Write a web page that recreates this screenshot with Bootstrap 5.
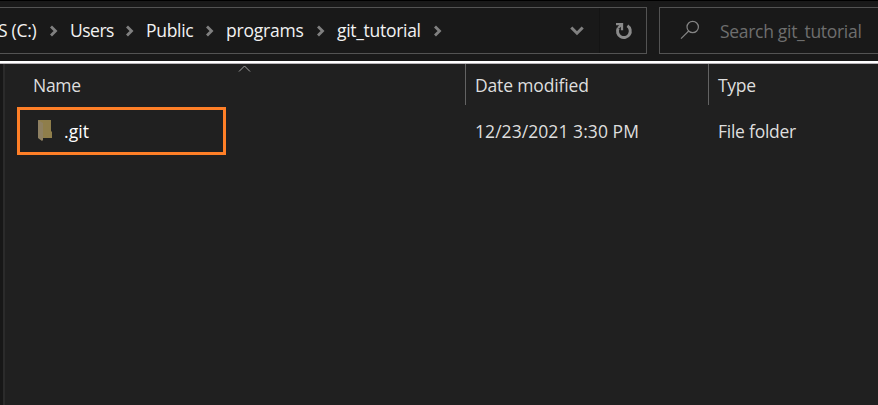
<!DOCTYPE html>
<html lang="en">
<head>
<meta charset="utf-8">
<meta name="viewport" content="width=device-width, initial-scale=1">
<title>git_tutorial</title>
<link href="https://cdn.jsdelivr.net/npm/bootstrap@5.3.0/dist/css/bootstrap.min.css" rel="stylesheet">
<style>
body{background:#202020;color:#dedede;font:17.5px/24px "Open Sans","Noto Sans",sans-serif;letter-spacing:-.3px;height:405px}
svg{display:block;flex:none}
.topbar{height:61px;background:#191919;border-top:1px solid #000;padding-top:6px}
.address{width:647px;height:47px;border:1px solid #535353;border-left:0;color:#f2f2f2}
.crumb{white-space:nowrap;flex:none;padding-bottom:1px}
.crumb-drive{width:50px;margin-left:-2px}
.crumb-users{width:54px;letter-spacing:-.5px}
.crumb-public{width:58px}
.crumb-programs{width:89px;letter-spacing:-.2px}
.crumb-current{width:95px}
.sep{width:22px;flex:none;padding-left:1px}
.chevron-down{margin-right:15px}
.reload{width:47px;border-left:1px solid #141414;padding-left:2px}
.search{width:219px;height:47px;border:1px solid #535353;border-right:0;margin-left:12px;color:#6e6e6e}
.search-icon{margin:-2px 20px 0 20px}
.divider{height:3px;background:#fff;border-bottom:1px solid #b8b4b8}
.pane{height:341px;border-left:3px solid #171717}
.listing{border-left:2px solid #2b2b2b}
.headings{height:41px}
.col-name{width:460px;padding:1px 0 0 28px;flex:none}
.col-date{width:243px;border-left:1px solid #636363;padding:1px 0 0 9px;flex:none;letter-spacing:-.15px}
.col-type{border-left:1px solid #636363;padding:1px 0 0 9px}
.sort{left:233px;top:1px}
.file-row{height:48px;margin-top:2px}
.file-row .col-date,.file-row .col-type{border-color:transparent;padding-top:0}
.file-row .col-date{letter-spacing:.06px}
.file-row .col-type{letter-spacing:-.25px}
.marked{width:209px;height:48px;border:3px solid #ff7f27;margin-left:12px;color:#fff}
.folder{margin:-2px 12px 0 18px}
.file-name{letter-spacing:.1px}
</style>
</head>
<body class="m-0 overflow-hidden">
<header class="topbar d-flex">
  <nav class="address d-flex align-items-center" aria-label="Path">
    <span class="crumb crumb-drive">S (C:)</span>
    <span class="sep"><svg width="9" height="12" viewBox="0 0 9 12" fill="none" stroke="#808080" stroke-width="2.8"><path d="M2 1.5 6.5 6 2 10.5"/></svg></span>
    <span class="crumb crumb-users">Users</span>
    <span class="sep"><svg width="9" height="12" viewBox="0 0 9 12" fill="none" stroke="#808080" stroke-width="2.8"><path d="M2 1.5 6.5 6 2 10.5"/></svg></span>
    <span class="crumb crumb-public">Public</span>
    <span class="sep"><svg width="9" height="12" viewBox="0 0 9 12" fill="none" stroke="#808080" stroke-width="2.8"><path d="M2 1.5 6.5 6 2 10.5"/></svg></span>
    <span class="crumb crumb-programs">programs</span>
    <span class="sep"><svg width="9" height="12" viewBox="0 0 9 12" fill="none" stroke="#808080" stroke-width="2.8"><path d="M2 1.5 6.5 6 2 10.5"/></svg></span>
    <span class="crumb crumb-current">git_tutorial</span>
    <span class="sep"><svg width="9" height="12" viewBox="0 0 9 12" fill="none" stroke="#808080" stroke-width="2.8"><path d="M2 1.5 6.5 6 2 10.5"/></svg></span>
    <svg class="chevron-down ms-auto" width="14" height="10" viewBox="0 0 14 10" fill="none" stroke="#808080" stroke-width="3"><path d="M1.3 1.5 7 7.2l5.7-5.7"/></svg>
    <span class="reload h-100 d-flex align-items-center justify-content-center"><svg width="18" height="18" viewBox="0 0 18 18" fill="none" stroke="#8a8a8a" stroke-width="3"><path d="M3.2 6.2A6.4 6.4 0 1 0 12.4 3.8"/><path d="M1 2.2H7v6M6 3 3 6" stroke-width="2.3"/></svg></span>
  </nav>
  <div class="search d-flex align-items-center">
    <svg class="search-icon" width="20" height="20" viewBox="0 0 20 20" fill="none" stroke="#858585" stroke-width="1.2"><circle cx="12.7" cy="7" r="5.7"/><path d="M8.7 11 1 18.7"/></svg>
    <span class="search-text">Search git_tutorial</span>
  </div>
</header>
<div class="divider"></div>
<main class="pane">
  <div class="listing h-100">
    <div class="headings d-flex align-items-center position-relative">
      <div class="col-name">Name</div>
      <div class="col-date h-100 d-flex align-items-center">Date modified</div>
      <div class="col-type h-100 d-flex align-items-center">Type</div>
      <svg class="sort position-absolute" width="13" height="7" viewBox="0 0 13 7" fill="none" stroke="#a0a0a0"><path d="M1 6.5 6.5 1 12 6.5"/></svg>
    </div>
    <div class="file-row d-flex align-items-center">
      <div class="col-name p-0"><div class="marked d-flex align-items-center">
        <svg class="folder" width="14" height="21" viewBox="0 0 14 21"><path d="M0 0h13v11l1 1v6H4z" fill="#8f7e4b"/><path d="M0 0 5 3v17l-1 1-4-3z" fill="#8e8062"/></svg>
        <span class="file-name">.git</span>
      </div></div>
      <div class="col-date">12/23/2021 3:30 PM</div>
      <div class="col-type">File folder</div>
    </div>
  </div>
</main>
<script src="https://cdn.jsdelivr.net/npm/bootstrap@5.3.0/dist/js/bootstrap.bundle.min.js"></script>
</body>
</html>
